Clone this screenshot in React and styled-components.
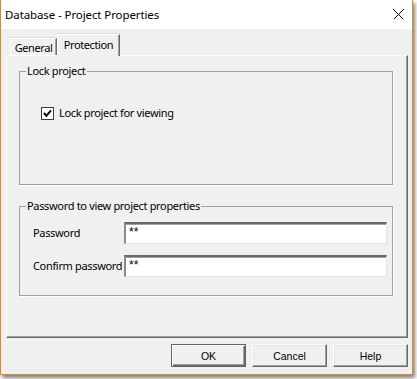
import React from "react"
import styled, { createGlobalStyle } from "styled-components"

const Global = createGlobalStyle`
  html, body {
    margin: 0;
    padding: 0;
    background: #ffffff;
  }
  body {
    font-family: "Noto Sans", "Open Sans", sans-serif;
    font-size: 11px;
    letter-spacing: -0.33px;
    color: #000;
  }
`

const Screen = styled.div`
  width: 417px;
  height: 379px;
  overflow: hidden;
  background: #ffffff;
`

const Window = styled.div`
  width: 413px;
  height: 375px;
  box-sizing: border-box;
  display: flex;
  flex-direction: column;
  background: #f0f0f0;
  border: 1px solid #e5871f;
  border-top: none;
  box-shadow: 2px 3px 4px rgba(0, 0, 0, 0.5);
`

const TitleBar = styled.div`
  height: 29px;
  flex: none;
  display: flex;
  align-items: center;
  justify-content: space-between;
  background: #ffffff;
  padding: 0 8px 0 4px;
`

const Title = styled.span`
  font-size: 11.5px;
  letter-spacing: -0.1px;
  color: #000;
`

const Body = styled.div`
  flex: 1;
  display: flex;
  flex-direction: column;
  padding: 5px 4px 0 5px;
`

const TabRow = styled.div`
  height: 21px;
  display: flex;
  align-items: flex-end;
  padding-left: 4px;
  position: relative;
  z-index: 1;
`

const Tab = styled.div`
  box-sizing: border-box;
  height: ${(p) => (p.$active ? "22px" : "17px")};
  width: ${(p) => p.$width}px;
  margin-bottom: ${(p) => (p.$active ? "-1px" : "0")};
  display: flex;
  align-items: ${(p) => (p.$active ? "flex-start" : "center")};
  justify-content: center;
  padding-top: ${(p) => (p.$active ? "2px" : "1px")};
  background: #f0f0f0;
  border-top: 1px solid #ffffff;
  border-left: 1px solid #ffffff;
  border-right: 1px solid #696969;
  box-shadow: inset -1px 0 #a0a0a0, 0 -1px 0 #dcdcdc;
  font-size: 11px;
  letter-spacing: -0.4px;
  line-height: 15px;
`

const Panel = styled.div`
  box-sizing: border-box;
  height: 283px;
  display: flex;
  flex-direction: column;
  gap: 14px;
  padding: 8px 14px 0 12px;
  background: #f0f0f0;
  border-top: 1px solid #ffffff;
  border-left: 1px solid #ffffff;
  border-right: 1px solid #696969;
  border-bottom: 1px solid #696969;
  box-shadow: inset -1px -1px #a0a0a0;
`

const Group = styled.fieldset`
  margin: 0;
  padding: 0;
  box-sizing: border-box;
  height: ${(p) => p.$height}px;
  border: 1px solid #a0a0a0;
  box-shadow: 1px 1px 0 #ffffff;
  min-width: 0;
`

const Legend = styled.legend`
  padding: 0 1px;
  margin-left: 6px;
  line-height: 14px;
`

const GroupBody = styled.div`
  padding: ${(p) => p.$pad};
`

const CheckRow = styled.label`
  display: flex;
  align-items: center;
  gap: 5px;
  line-height: 14px;
`

const CheckBox = styled.span`
  width: 13px;
  height: 13px;
  box-sizing: border-box;
  display: flex;
  align-items: center;
  justify-content: center;
  background: #ffffff;
  border: 1px solid #3c3c3c;
`

const FieldGrid = styled.div`
  display: grid;
  grid-template-columns: 91px 1fr;
  row-gap: 11px;
  align-items: center;
`

const FieldLabel = styled.span`
  line-height: 14px;
  white-space: nowrap;
`

const Input = styled.div`
  box-sizing: border-box;
  height: 22px;
  background: #ffffff;
  border-top: 2px solid #696969;
  border-left: 2px solid #8a8a8a;
  border-right: 1px solid #e3e3e3;
  border-bottom: 1px solid #e3e3e3;
  box-shadow: inset 0 1px #a0a0a0;
  padding: 2px 0 0 3px;
  font-family: "Liberation Sans", sans-serif;
  font-size: 12px;
  letter-spacing: 0;
  line-height: 12px;
  color: #000;
`

const ButtonRow = styled.div`
  display: flex;
  justify-content: flex-end;
  gap: 6px;
  margin-top: 6px;
`

const Button = styled.button`
  box-sizing: border-box;
  width: 75px;
  height: 23px;
  padding: 0;
  background: #f0f0f0;
  font-family: "Liberation Sans", sans-serif;
  font-size: 10.5px;
  letter-spacing: 0;
  color: #000;
  border: 1px solid;
  border-color: ${(p) =>
    p.$default ? "#646464" : "#ffffff #696969 #696969 #ffffff"};
  box-shadow: ${(p) =>
    p.$default
      ? "inset 1px 1px #ffffff, inset -1px -1px #696969, inset -2px -2px #a0a0a0"
      : "inset -1px -1px #a0a0a0, inset 1px 1px #e3e3e3"};
`

const CloseIcon = () => (
  <svg width="11" height="11" viewBox="0 0 11 11" shapeRendering="crispEdges">
    <path d="M0.5 0.5 L10.5 10.5 M10.5 0.5 L0.5 10.5" stroke="#000" strokeWidth="1" />
  </svg>
)

const CheckMark = () => (
  <svg width="9" height="9" viewBox="0 0 9 9">
    <path d="M1 4 L3.4 6.8 L8 1.4" stroke="#000" strokeWidth="2" fill="none" />
  </svg>
)

export default function App() {
  return (
    <Screen>
      <Global />
      <Window>
        <TitleBar>
          <Title>Database - Project Properties</Title>
          <CloseIcon />
        </TitleBar>
        <Body>
          <TabRow>
            <Tab $width={47}>General</Tab>
            <Tab $width={63} $active>
              Protection
            </Tab>
          </TabRow>
          <Panel>
            <Group $height={121}>
              <Legend>Lock project</Legend>
              <GroupBody $pad="28px 0 0 21px">
                <CheckRow>
                  <CheckBox>
                    <CheckMark />
                  </CheckBox>
                  Lock project for viewing
                </CheckRow>
              </GroupBody>
            </Group>
            <Group $height={97}>
              <Legend>Password to view project properties</Legend>
              <GroupBody $pad="9px 5px 0 13px">
                <FieldGrid>
                  <FieldLabel>Password</FieldLabel>
                  <Input>**</Input>
                  <FieldLabel>Confirm password</FieldLabel>
                  <Input>**</Input>
                </FieldGrid>
              </GroupBody>
            </Group>
          </Panel>
          <ButtonRow>
            <Button $default>OK</Button>
            <Button>Cancel</Button>
            <Button>Help</Button>
          </ButtonRow>
        </Body>
      </Window>
    </Screen>
  )
}
